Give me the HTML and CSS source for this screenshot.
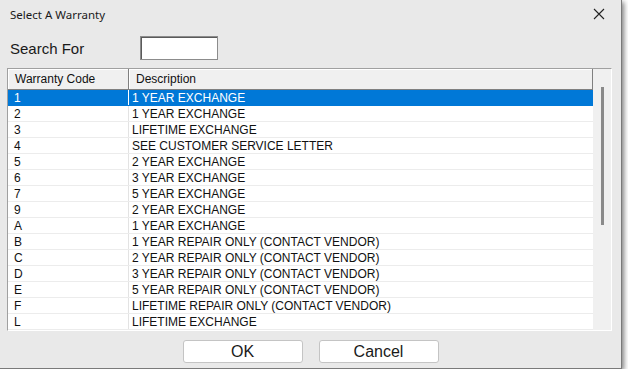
FILE: index.html
```html
<!DOCTYPE html>
<html lang="en">
<head>
  <meta charset="UTF-8">
  <title>Select A Warranty</title>
  <link rel="stylesheet" href="styles.css">
</head>
<body>

  <div class="window">
    <!-- Title bar -->
    <div class="titlebar">
      <span class="title">Select A Warranty</span>
      <svg class="close" width="12" height="12" viewBox="0 0 12 12">
        <path d="M1 1 L11 11 M11 1 L1 11" stroke="#222" stroke-width="1.1" fill="none"/>
      </svg>
    </div>

    <!-- Search row -->
    <div class="search-row">
      <label for="search">Search For</label>
      <input type="text" id="search">
    </div>

    <!-- Warranty grid -->
    <div class="grid">
      <div class="grid-body">
        <div class="grid-head">
          <div class="cell code">Warranty Code</div>
          <div class="cell desc">Description</div>
        </div>
        <div class="row selected"><div class="cell code">1</div><div class="cell desc">1 YEAR EXCHANGE</div></div>
        <div class="row"><div class="cell code">2</div><div class="cell desc">1 YEAR EXCHANGE</div></div>
        <div class="row"><div class="cell code">3</div><div class="cell desc">LIFETIME EXCHANGE</div></div>
        <div class="row"><div class="cell code">4</div><div class="cell desc">SEE CUSTOMER SERVICE LETTER</div></div>
        <div class="row"><div class="cell code">5</div><div class="cell desc">2 YEAR EXCHANGE</div></div>
        <div class="row"><div class="cell code">6</div><div class="cell desc">3 YEAR EXCHANGE</div></div>
        <div class="row"><div class="cell code">7</div><div class="cell desc">5 YEAR EXCHANGE</div></div>
        <div class="row"><div class="cell code">9</div><div class="cell desc">2 YEAR EXCHANGE</div></div>
        <div class="row"><div class="cell code">A</div><div class="cell desc">1 YEAR EXCHANGE</div></div>
        <div class="row"><div class="cell code">B</div><div class="cell desc">1 YEAR REPAIR ONLY (CONTACT VENDOR)</div></div>
        <div class="row"><div class="cell code">C</div><div class="cell desc">2 YEAR REPAIR ONLY (CONTACT VENDOR)</div></div>
        <div class="row"><div class="cell code">D</div><div class="cell desc">3 YEAR REPAIR ONLY (CONTACT VENDOR)</div></div>
        <div class="row"><div class="cell code">E</div><div class="cell desc">5 YEAR REPAIR ONLY (CONTACT VENDOR)</div></div>
        <div class="row"><div class="cell code">F</div><div class="cell desc">LIFETIME REPAIR ONLY (CONTACT VENDOR)</div></div>
        <div class="row"><div class="cell code">L</div><div class="cell desc">LIFETIME EXCHANGE</div></div>
      </div>
      <div class="scrollbar">
        <div class="thumb"></div>
      </div>
    </div>

    <!-- Buttons -->
    <div class="buttons">
      <button class="btn">OK</button>
      <button class="btn">Cancel</button>
    </div>
  </div>

</body>
</html>
```

FILE: styles.css
```css
body {
  margin: 0;
  background-color: #fff;
  font-family: "Liberation Sans", Arial, sans-serif;
  color: #111;
}

.window {
  width: 621px;
  height: 368px;
  background-color: #e9e9e9;
  border-right: 1px solid #7a7a7a;
  border-bottom: 1px solid #7a7a7a;
  box-shadow: 2px 2px 5px rgba(0, 0, 0, 0.5);
  display: flex;
  flex-direction: column;
}

.titlebar {
  height: 28px;
  display: flex;
  align-items: center;
  justify-content: space-between;
  padding: 0 16px 0 10px;
}

.title {
  font-family: "Noto Sans", "Open Sans", sans-serif;
  font-size: 11.5px;
  color: #1a1a1a;
}

.close {
  display: block;
}

.search-row {
  display: flex;
  align-items: center;
  height: 24px;
  margin-top: 8px;
  padding-left: 10px;
}

.search-row label {
  font-size: 15px;
  width: 130px;
  color: #1a1a1a;
}

#search {
  width: 76px;
  height: 22px;
  margin: 0;
  padding: 0;
  background-color: #fff;
  border: 1px solid #8c8c8c;
  box-shadow: inset 1px 1px 0 #5a5a5a;
}

.grid {
  margin: 8px 9px 0 7px;
  height: 261px;
  display: flex;
  border-top: 1px solid #a0a0a0;
  border-left: 1px solid #a0a0a0;
  border-bottom: 1px solid #fff;
  border-right: 1px solid #fff;
  background-color: #fff;
  overflow: hidden;
}

.grid-body {
  flex: 1;
}

.grid-head {
  display: flex;
  height: 20px;
  background-color: #f0f0f0;
  border-right: 1px solid #808080;
  border-bottom: 1px solid #808080;
  box-shadow: inset 1px 1px 0 #fff;
}

.grid-head .cell {
  line-height: 21px;
  padding-left: 7px;
  color: #111;
}

.grid-head .code {
  width: 113px;
  border-right: 1px solid #808080;
  box-shadow: 1px 0 0 #fff;
}

.cell {
  font-size: 12px;
  white-space: nowrap;
}

.code {
  width: 114px;
  padding-left: 6px;
  border-right: 1px solid #e3e3e3;
}

.desc {
  flex: 1;
  padding-left: 3px;
}

.row {
  display: flex;
  height: 15px;
  line-height: 17px;
  border-bottom: 1px solid #ececec;
}

.row.selected {
  background-color: #0078d7;
  color: #fff;
  border-bottom-color: #0078d7;
}

.row.selected .code {
  border-right-color: #fff;
}

.scrollbar {
  width: 18px;
  background-color: #f0f0f0;
  padding-top: 18px;
  display: flex;
  justify-content: center;
}

.thumb {
  width: 3px;
  height: 138px;
  background-color: #8a8a8a;
}

.buttons {
  display: flex;
  justify-content: center;
  gap: 16px;
  margin-top: 9px;
}

.btn {
  width: 120px;
  height: 23px;
  background-color: #fff;
  border: 1px solid #c4c4c4;
  border-radius: 3px;
  font-family: "Liberation Sans", Arial, sans-serif;
  font-size: 16px;
  color: #1a1a1a;
  padding: 0;
}
```
